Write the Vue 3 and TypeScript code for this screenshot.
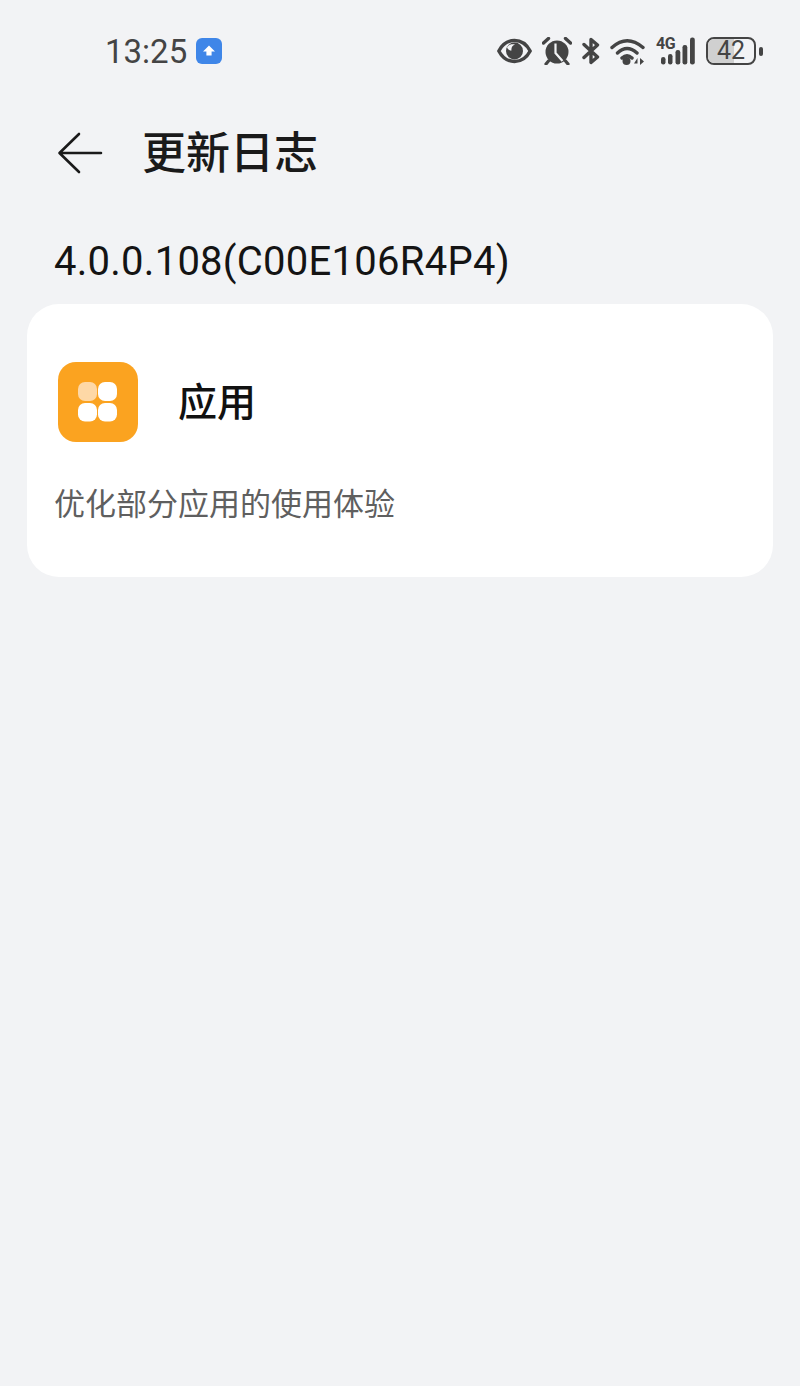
<script setup lang="ts">
const version = '4.0.0.108(C00E106R4P4)'
</script>

<template>
  <div class="page">
    <div class="status">
      <div class="status-left">
        <span class="time">13:25</span>
        <span class="badge">
          <svg width="26" height="26" viewBox="0 0 26 26">
            <rect width="26" height="26" rx="6" fill="#3f86e8" />
            <path d="M13 7.500 19 13.500H15.600V17.500H10.400V13.500H7Z" fill="#fff" />
          </svg>
        </span>
      </div>
      <div class="status-right">
        <svg class="ic" width="35" height="28" viewBox="0 0 35 28">
          <path d="M1.800 14C5.500 7 11 3.500 17.500 3.500S29.500 7 33.200 14C29.500 21 24 24.500 17.500 24.500S5.500 21 1.800 14Z" fill="none" stroke="#444" stroke-width="3.400" stroke-linejoin="round" />
          <circle cx="17.500" cy="14" r="8.500" fill="#444" />
          <path d="M10 10.500C11.500 7.500 15 6.500 18 7.500 15.500 8.500 14 10.500 14.500 13.500 12.500 13.800 11 12.500 10 10.500Z" fill="#f2f3f5" />
        </svg>
        <svg class="ic" width="30" height="28" viewBox="0 0 30 28">
          <circle cx="15" cy="15" r="11.500" fill="#444" />
          <path d="M13.500 6.500V16L20.500 24" fill="none" stroke="#f2f3f5" stroke-width="2.200" />
          <path d="M1.500 6 6.500 1.500M28.500 6 23.500 1.500" stroke="#444" stroke-width="3.400" fill="none" stroke-linecap="round" />
          <path d="M6.500 24 4 27M23.500 24 26 27" stroke="#444" stroke-width="3.200" fill="none" stroke-linecap="round" />
        </svg>
        <svg class="ic" width="18" height="28" viewBox="0 0 18 28">
          <path d="M2 7.500 15.500 20 9 25.500V2.500L15.500 8 2 20.500" fill="none" stroke="#444" stroke-width="3.400" stroke-linejoin="round" stroke-linecap="round" />
        </svg>
        <svg class="ic" width="36" height="28" viewBox="0 0 36 28">
          <path d="M2 10.500Q17 -3 33 10.500M7.500 16Q17 7 27 16M12 21Q17 16.500 22 21" fill="none" stroke="#444" stroke-width="3.400" stroke-linecap="round" />
          <circle cx="16.500" cy="24" r="4" fill="#444" />
          <path d="M24 26.500 27.500 21V26.500ZM30 21 34 24.500 30 28Z" fill="#444" />
        </svg>
        <div class="signal">
          <span class="net">4G</span>
          <svg width="40" height="28" viewBox="0 0 40 28">
            <rect x="5" y="20" width="4.500" height="7.500" rx="2.200" fill="#444" />
            <rect x="12" y="17" width="4.500" height="10.500" rx="2.200" fill="#444" />
            <rect x="19.500" y="13" width="4.800" height="14.500" rx="2.200" fill="#444" />
            <rect x="26.500" y="8" width="4.800" height="19.500" rx="2.200" fill="#444" />
            <rect x="34" y="0.500" width="4.800" height="27" rx="2.200" fill="#444" />
          </svg>
        </div>
        <div class="battery">
          <div class="shell">
            <span class="fill"></span>
            <span class="level">42</span>
          </div>
          <span class="cap"></span>
        </div>
      </div>
    </div>

    <div class="titlebar">
      <svg class="back" width="46" height="42" viewBox="0 0 46 42">
        <path d="M22 2 2.500 21 22 40M3 21H44" fill="none" stroke="#1a1a1a" stroke-width="2.600" stroke-linecap="round" stroke-linejoin="round" />
      </svg>
      <h1>更新日志</h1>
    </div>

    <div class="version">{{ version }}</div>

    <section class="card">
      <div class="card-head">
        <svg width="80" height="80" viewBox="0 0 80 80">
          <rect width="80" height="80" rx="18" fill="#fba320" />
          <rect x="20" y="20" width="19" height="19" rx="7" fill="#fed8a6" />
          <rect x="40" y="20" width="19" height="19" rx="7" fill="#fff" />
          <rect x="20" y="41" width="19" height="18.500" rx="7" fill="#fff" />
          <rect x="40" y="41" width="19" height="18.500" rx="7" fill="#fff" />
        </svg>
        <span class="card-title">应用</span>
      </div>
      <p class="card-text">优化部分应用的使用体验</p>
    </section>
  </div>
</template>

<style>
html, body { margin: 0; background: #f2f3f5; }
</style>

<style scoped>
.page {
  width: 800px;
  height: 1386px;
  background: #f2f3f5;
  font-family: "Roboto", "Noto Sans CJK SC", sans-serif;
  overflow: hidden;
}
.status {
  height: 80px;
  padding: 22px 37px 0 105px;
  box-sizing: border-box;
  display: flex;
  align-items: center;
  justify-content: space-between;
  color: #444;
}
.status-left { display: flex; align-items: center; gap: 9px; }
.time { font-size: 33px; line-height: 40px; padding-top: 2px; }
.badge { display: flex; }
.status-right { display: flex; align-items: center; gap: 10px; }
.ic { display: block; flex: none; }
.signal { position: relative; width: 40px; height: 28px; }
.signal svg { display: block; }
.net {
  position: absolute;
  left: 0;
  top: -1px;
  font-size: 16px;
  line-height: 16px;
  font-weight: 700;
  letter-spacing: -0.5px;
  color: #444;
}
.battery { display: flex; align-items: center; gap: 3px; }
.shell {
  position: relative;
  width: 50px;
  height: 28px;
  box-sizing: border-box;
  border: 2.500px solid #444;
  border-radius: 8px;
  display: flex;
  align-items: center;
  justify-content: center;
  overflow: hidden;
}
.fill { position: absolute; left: 0; top: 0; bottom: 0; width: 56%; background: #d0d0d0; }
.level { position: relative; font-size: 25px; line-height: 24px; color: #444; }
.cap { width: 4px; height: 9px; background: #444; border-radius: 2px; }
.titlebar {
  height: 62px;
  margin-top: 42px;
  padding-left: 57px;
  display: flex;
  align-items: center;
  gap: 39px;
}
.back { display: block; }
h1 {
  margin: 0;
  padding-top: 2px;
  font-size: 44px;
  line-height: 60px;
  font-weight: 500;
  color: #1a1a1a;
}
.version {
  margin-top: 50px;
  padding-left: 54px;
  font-size: 40px;
  line-height: 56px;
  font-weight: 400;
  letter-spacing: 0.26px;
  color: #141414;
}
.card {
  margin: 14px 27px 0;
  height: 273px;
  background: #fff;
  border-radius: 32px;
  box-sizing: border-box;
  padding: 58px 27px 0;
}
.card-head { display: flex; align-items: center; gap: 40px; padding-left: 4px; }
.card-head svg { display: block; }
.card-title { font-size: 39px; font-weight: 500; color: #111; line-height: 54px; padding-top: 2px; }
.card-text {
  margin: 39px 0 0;
  font-size: 31px;
  line-height: 48px;
  color: #5f5f5f;
}
</style>
